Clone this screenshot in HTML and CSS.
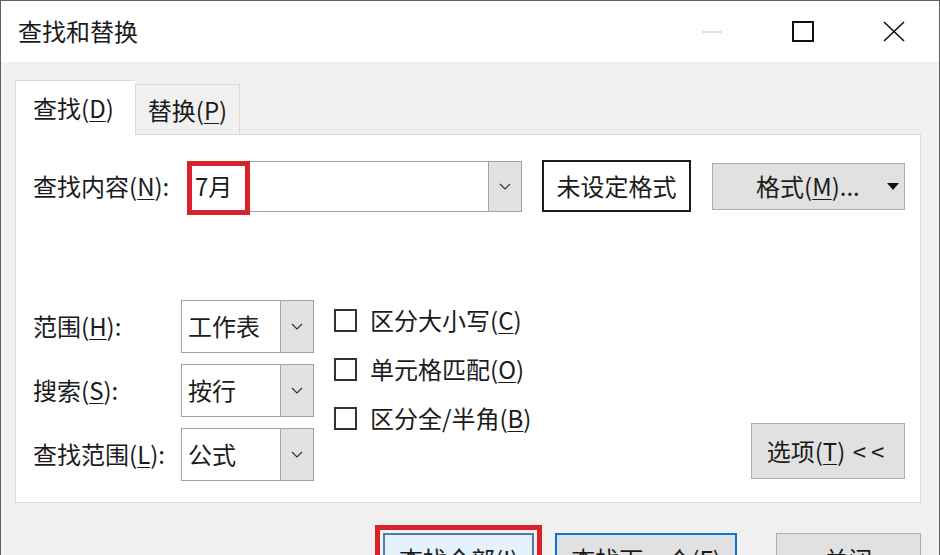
FILE: index.html
```html
<!DOCTYPE html>
<html lang="zh-CN">
<head>
    <meta charset="UTF-8">
    <meta name="viewport" content="width=device-width, initial-scale=1.0">
    <title>查找和替换</title>
    <link rel="stylesheet" href="styles.css">
</head>
<body>
    <div class="window">
        <header class="titlebar">
            <span class="title">查找和替换</span>
            <div class="controls">
                <span class="ctl">
                    <svg width="20" height="4" viewBox="0 0 20 4"><line x1="0" y1="2" x2="20" y2="2" stroke="#cfcfcf" stroke-width="1.2"/></svg>
                </span>
                <span class="ctl">
                    <svg width="22" height="21" viewBox="0 0 22 21"><rect x="1" y="1" width="20" height="19" fill="none" stroke="#111" stroke-width="2"/></svg>
                </span>
                <span class="ctl">
                    <svg width="22" height="21" viewBox="0 0 22 21"><path d="M1 1 L21 20 M21 1 L1 20" stroke="#111" stroke-width="1.6" fill="none"/></svg>
                </span>
            </div>
        </header>

        <main class="content">
            <div class="tabs">
                <div class="tab active">查找(<u>D</u>)</div>
                <div class="tab">替换(<u>P</u>)</div>
            </div>

            <section class="panel">
                <div class="find-row">
                    <label class="lbl find-lbl">查找内容(<u>N</u>):</label>
                    <div class="combo find-combo">
                        <span class="value">7月</span>
                        <span class="drop">
                            <svg width="12" height="7" viewBox="0 0 12 7"><polyline points="1,1 6,6 11,1" fill="none" stroke="#333" stroke-width="1.2"/></svg>
                        </span>
                        <span class="mark"></span>
                    </div>
                    <button class="btn preview">未设定格式</button>
                    <button class="btn fmt"><span>格式(<u>M</u>)...</span><span class="caret"></span></button>
                </div>

                <div class="options">
                    <div class="selects">
                        <label class="lbl">范围(<u>H</u>):</label>
                        <div class="combo sel">
                            <span class="value">工作表</span>
                            <span class="drop">
                                <svg width="12" height="7" viewBox="0 0 12 7"><polyline points="1,1 6,6 11,1" fill="none" stroke="#333" stroke-width="1.2"/></svg>
                            </span>
                        </div>
                        <label class="lbl">搜索(<u>S</u>):</label>
                        <div class="combo sel">
                            <span class="value">按行</span>
                            <span class="drop">
                                <svg width="12" height="7" viewBox="0 0 12 7"><polyline points="1,1 6,6 11,1" fill="none" stroke="#333" stroke-width="1.2"/></svg>
                            </span>
                        </div>
                        <label class="lbl">查找范围(<u>L</u>):</label>
                        <div class="combo sel">
                            <span class="value">公式</span>
                            <span class="drop">
                                <svg width="12" height="7" viewBox="0 0 12 7"><polyline points="1,1 6,6 11,1" fill="none" stroke="#333" stroke-width="1.2"/></svg>
                            </span>
                        </div>
                    </div>

                    <ul class="checks">
                        <li class="check"><span class="box"></span><span>区分大小写(<u>C</u>)</span></li>
                        <li class="check"><span class="box"></span><span>单元格匹配(<u>O</u>)</span></li>
                        <li class="check"><span class="box"></span><span>区分全/半角(<u>B</u>)</span></li>
                    </ul>

                    <button class="btn opt"><span>选项(<u>T</u>) <span class="arrows">&lt;&lt;</span></span></button>
                </div>
            </section>

            <div class="actions">
                <button class="btn act find-all">查找全部(<u>I</u>)</button>
                <button class="btn act find-next">查找下一个(<u>F</u>)</button>
                <button class="btn act close">关闭</button>
            </div>
        </main>
    </div>
</body>
</html>
```

FILE: styles.css
```css
body {
    margin: 0;
    font-family: "Noto Sans CJK SC", "Noto Sans", sans-serif;
    color: #1b1b1b;
    background: #fff;
}
u {
    text-underline-offset: 3px;
    text-decoration-thickness: 1px;
}
.window {
    width: 940px;
    height: 555px;
    box-sizing: border-box;
    border: 1px solid #5f5f5f;
    border-bottom: none;
    overflow: hidden;
    display: flex;
    flex-direction: column;
    background: #f0f0f0;
}
.titlebar {
    height: 61px;
    flex: none;
    background: #fff;
    display: flex;
    align-items: center;
    padding-left: 17px;
    font-size: 24px;
}
.title {
    flex: 1;
    margin-top: -2px;
}
.controls {
    display: flex;
    align-self: stretch;
}
.ctl {
    width: 91px;
    display: flex;
    align-items: center;
    justify-content: center;
}
.content {
    padding: 18px 18px 0 14px;
    font-size: 24px;
    line-height: 1.2;
}
.tabs {
    display: flex;
    align-items: flex-end;
}
.tab {
    box-sizing: border-box;
    width: 105px;
    height: 50px;
    border: 1px solid #d9d9d9;
    border-bottom: none;
    background: #f0f0f0;
    display: flex;
    align-items: center;
    justify-content: center;
    padding-top: 2px;
}
.tab.active {
    width: 120px;
    height: 55px;
    margin-bottom: -1px;
    background: #fff;
    border-right: none;
    position: relative;
    z-index: 1;
    padding: 0 4px 0 0;
}
.panel {
    box-sizing: border-box;
    height: 369px;
    background: #fff;
    border: 1px solid #d9d9d9;
    display: flex;
    flex-direction: column;
    padding: 25px 15px 21px 17px;
}
.find-row {
    display: flex;
    align-items: center;
    height: 52px;
}
.lbl {
    white-space: nowrap;
}
.find-lbl {
    width: 154px;
}
.combo {
    position: relative;
    box-sizing: border-box;
    border: 1px solid #a3a3a3;
    background: #fff;
    display: flex;
}
.combo .value {
    flex: 1;
    display: flex;
    align-items: center;
    padding-left: 6px;
}
.combo .drop {
    width: 32px;
    background: #e1e1e1;
    border-left: 1px solid #a3a3a3;
    display: flex;
    align-items: center;
    justify-content: center;
}
.find-combo {
    width: 335px;
    height: 51px;
}
.find-combo .value {
    padding-left: 7px;
}
.mark {
    position: absolute;
    left: -1px;
    top: -1px;
    width: 63px;
    height: 54px;
    box-sizing: border-box;
    border: 5px solid #d8232a;
}
.btn {
    box-sizing: border-box;
    font: inherit;
    color: inherit;
    border: 1px solid #adadad;
    background: #e1e1e1;
    padding: 0;
    display: flex;
    align-items: center;
    justify-content: center;
}
.preview {
    width: 149px;
    height: 52px;
    margin-left: 20px;
    background: #fff;
    border: 2px solid #1b1b1b;
}
.fmt {
    width: 193px;
    height: 47px;
    margin-left: 21px;
    justify-content: flex-start;
    padding-left: 43px;
}
.caret {
    margin-left: auto;
    margin-right: 5px;
    border-left: 6px solid transparent;
    border-right: 6px solid transparent;
    border-top: 7px solid #111;
}
.options {
    margin-top: auto;
    display: flex;
    align-items: flex-start;
}
.selects {
    display: grid;
    grid-template-columns: 148px 133px;
    grid-auto-rows: 53px;
    row-gap: 11px;
    align-items: center;
}
.sel {
    height: 53px;
}
.sel .drop {
    width: 32px;
}
.checks {
    list-style: none;
    margin: -4px 0 0 20px;
    padding: 0;
}
.check {
    height: 49px;
    display: flex;
    align-items: center;
    gap: 13px;
}
.box {
    width: 23px;
    height: 23px;
    box-sizing: border-box;
    border: 2px solid #333;
    background: #fff;
}
.opt {
    margin-left: auto;
    align-self: flex-end;
    margin-bottom: 2px;
    width: 154px;
    height: 56px;
}
.arrows {
    letter-spacing: 5px;
    margin-left: 2px;
}
.actions {
    display: flex;
    padding-top: 30px;
}
.act {
    height: 52px;
}
.find-all {
    width: 152px;
    margin-left: 368px;
    background: #e5f1fb;
    border: 2px solid #4f7cae;
    outline: 5px solid #d8232a;
    outline-offset: 3px;
}
.find-next {
    width: 182px;
    margin-left: 21px;
    border: 2px solid #0a74d0;
}
.close {
    width: 146px;
    margin-left: 39px;
}
```
